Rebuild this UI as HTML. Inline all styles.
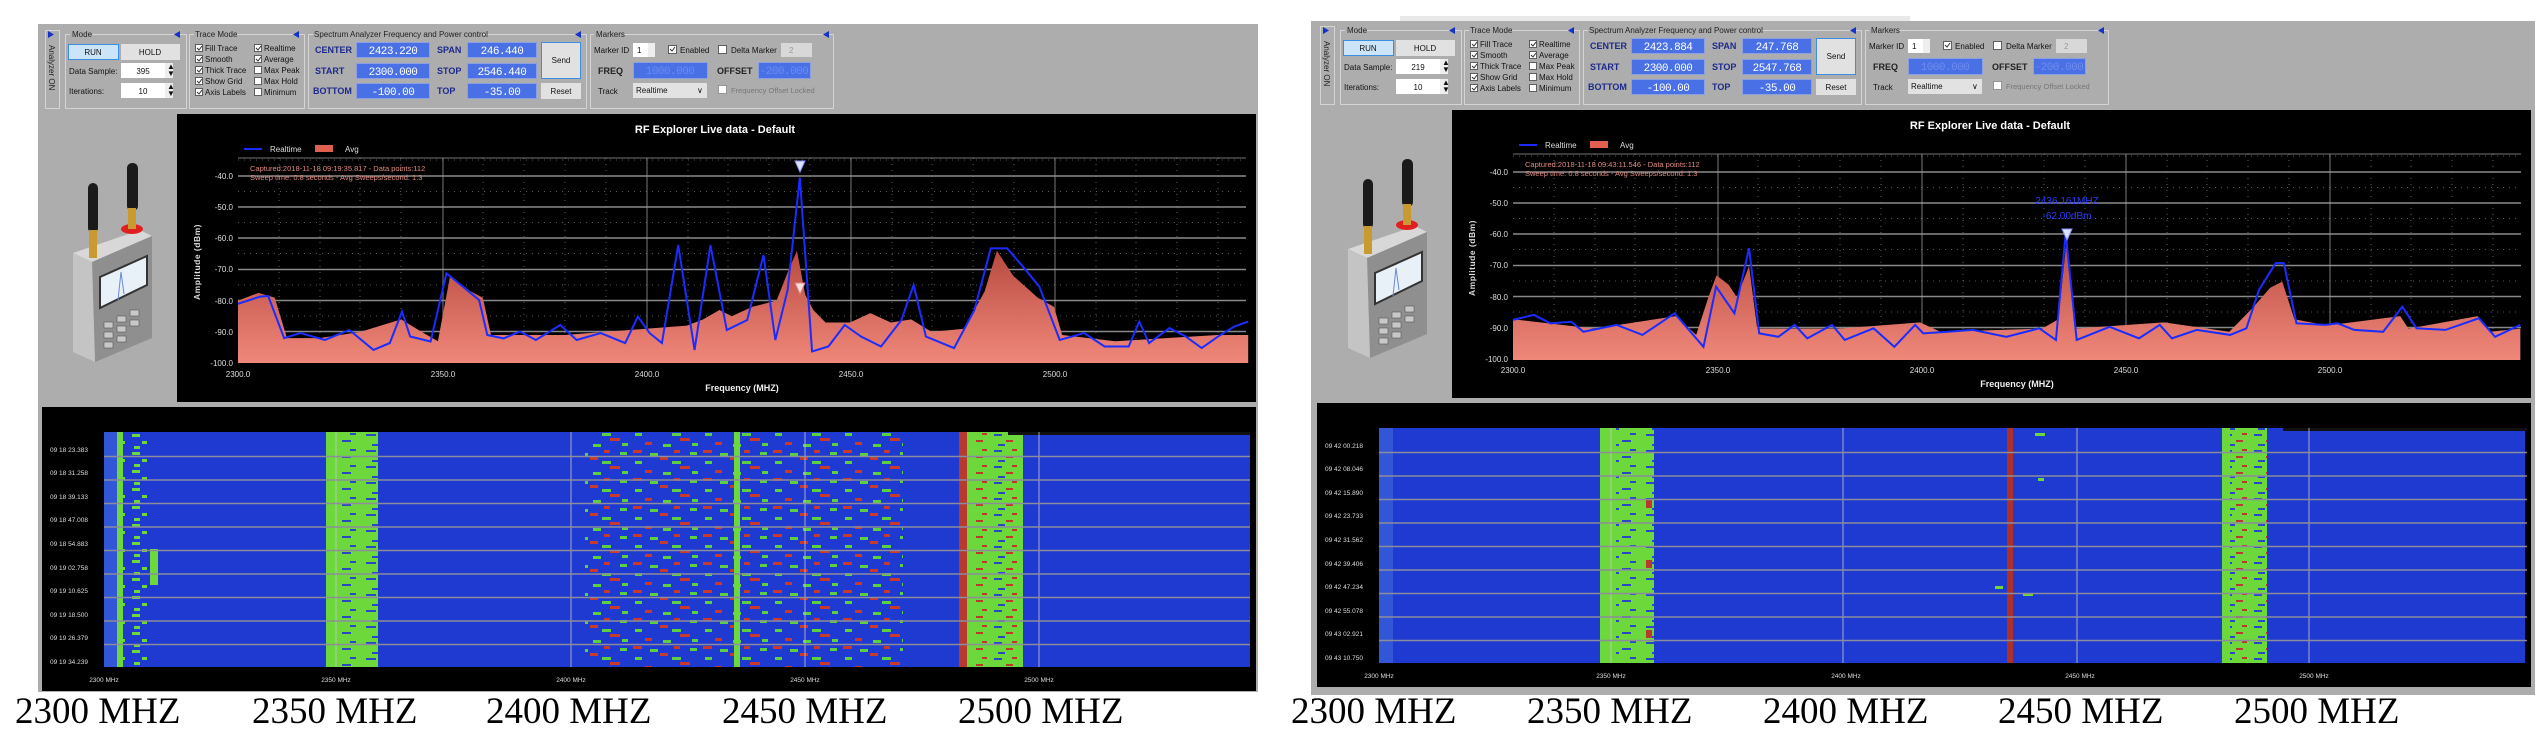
<!DOCTYPE html>
<html><head><meta charset="utf-8"><style>
html,body{margin:0;padding:0;background:#fff;width:2545px;height:752px;overflow:hidden}
svg{display:block}
text{font-family:"Liberation Sans",sans-serif}
.t8{font-size:8px;fill:#111}
.hd{font-size:8px;fill:#222}
.lb{font-size:9px;font-weight:bold;fill:#1c2a8c}
.dg{font-size:11px;fill:#fff;font-family:"Liberation Mono",monospace;letter-spacing:-0.5px}
.yt{font-size:8px;fill:#ddd;text-anchor:end}
.xt{font-size:8px;fill:#ddd;text-anchor:middle}
.tm{font-size:6.5px;fill:#ddd}
.ax{font-size:6.5px;fill:#ddd;text-anchor:middle}
.big text{font-family:"Liberation Serif",serif;font-size:37px;fill:#000}
</style></head><body>
<svg width="2545" height="752" viewBox="0 0 2545 752" xmlns="http://www.w3.org/2000/svg">
<defs>
<linearGradient id="rg" x1="0" y1="0" x2="0" y2="1"><stop offset="0" stop-color="#b84a40"/><stop offset="1" stop-color="#f0887a"/></linearGradient>
<pattern id="nz" width="70" height="28" patternUnits="userSpaceOnUse">
<rect x="3" y="2" width="9" height="3" fill="#c83a2c"/><rect x="30" y="9" width="8" height="3" fill="#c83a2c"/><rect x="50" y="18" width="10" height="3" fill="#c83a2c"/><rect x="15" y="22" width="7" height="3" fill="#c83a2c"/><rect x="44" y="2" width="6" height="3" fill="#c83a2c"/>
<rect x="20" y="5" width="8" height="3" fill="#5cd040"/><rect x="42" y="13" width="9" height="3" fill="#5cd040"/><rect x="5" y="13" width="7" height="3" fill="#5cd040"/><rect x="60" y="4" width="7" height="3" fill="#5cd040"/><rect x="33" y="24" width="8" height="3" fill="#5cd040"/><rect x="62" y="23" width="6" height="3" fill="#5cd040"/>
</pattern>
<pattern id="bt" width="40" height="16" patternUnits="userSpaceOnUse">
<rect x="6" y="2" width="10" height="2" fill="#2a48c0"/><rect x="22" y="8" width="9" height="2" fill="#2a48c0"/><rect x="12" y="12" width="7" height="2" fill="#2a48c0"/><rect x="30" y="1" width="6" height="2" fill="#2a48c0"/>
</pattern>
<pattern id="btr" width="30" height="16" patternUnits="userSpaceOnUse">
<rect x="4" y="2" width="8" height="2" fill="#2a48c0"/><rect x="16" y="8" width="7" height="2" fill="#b83a2c"/><rect x="8" y="12" width="7" height="2" fill="#2a48c0"/><rect x="22" y="1" width="5" height="2" fill="#b83a2c"/>
</pattern>
<pattern id="gd" width="26" height="18" patternUnits="userSpaceOnUse">
<rect x="2" y="2" width="8" height="3" fill="#6cd83c"/><rect x="12" y="9" width="9" height="3" fill="#6cd83c"/><rect x="4" y="14" width="6" height="3" fill="#6cd83c"/>
</pattern>

<g id="static">
 <g fill="none" stroke="#d4d4d4" stroke-width="1">
  <rect x="45.5" y="30.5" width="14" height="78"/>
  <rect x="65.5" y="34.5" width="121" height="74"/>
  <rect x="189.5" y="34.5" width="115" height="74"/>
  <rect x="308.5" y="34.5" width="278" height="74"/>
  <rect x="590.5" y="34.5" width="243" height="74"/>
 </g>
 <g fill="#1133cc">
  <polygon points="48,31 48,38 54,34.5"/>
  <polygon points="180,31 180,38 174,34.5"/>
  <polygon points="299,31 299,38 293,34.5"/>
  <polygon points="581,31 581,38 575,34.5"/>
  <polygon points="829,31 829,38 823,34.5"/>
 </g>
 <rect x="70" y="30" width="22" height="9" fill="#adadad"/><text class="hd" x="72" y="37">Mode</text>
 <rect x="194" y="30" width="42" height="9" fill="#adadad"/><text class="hd" x="195" y="37">Trace Mode</text>
 <rect x="313" y="30" width="170" height="9" fill="#adadad"/><text class="hd" x="314" y="37">Spectrum Analyzer Frequency and Power control</text>
 <rect x="594" y="30" width="30" height="9" fill="#adadad"/><text class="hd" x="596" y="37">Markers</text>
 <text class="hd" transform="translate(49,45) rotate(90)" font-size="7">Analyzer ON</text>
 <rect x="68.5" y="44.5" width="50" height="15" fill="#cce4f7" stroke="#3c8ee0"/><text class="t8" x="93" y="55" text-anchor="middle">RUN</text>
 <rect x="121" y="44" width="59" height="16" fill="#e1e1e1"/><text class="t8" x="150" y="55" text-anchor="middle">HOLD</text>
 <text class="t8" x="69" y="74">Data Sample:</text>
 <rect x="121" y="63" width="44" height="15" fill="#fff"/><rect x="165" y="63" width="8" height="15" fill="#eee"/><text class="t8" x="167" y="69" font-size="5">▲</text><text class="t8" x="167" y="76" font-size="5">▼</text>
 <text class="t8" x="69" y="94">Iterations:</text>
 <rect x="121" y="83" width="44" height="15" fill="#fff"/><rect x="165" y="83" width="8" height="15" fill="#eee"/><text class="t8" x="167" y="89" font-size="5">▲</text><text class="t8" x="167" y="96" font-size="5">▼</text>
 <text class="t8" x="143" y="94" text-anchor="middle">10</text>
 <g fill="#fff" stroke="#444" stroke-width="0.8">
  <rect x="195.5" y="44.5" width="7" height="7"/><rect x="195.5" y="55.5" width="7" height="7"/><rect x="195.5" y="66.5" width="7" height="7"/><rect x="195.5" y="77.5" width="7" height="7"/><rect x="195.5" y="88.5" width="7" height="7"/>
  <rect x="254.5" y="44.5" width="7" height="7"/><rect x="254.5" y="55.5" width="7" height="7"/><rect x="254.5" y="66.5" width="7" height="7"/><rect x="254.5" y="77.5" width="7" height="7"/><rect x="254.5" y="88.5" width="7" height="7"/>
 </g>
 <g fill="none" stroke="#333" stroke-width="1">
  <path d="M197 48l2 2 3-4M197 59l2 2 3-4M197 70l2 2 3-4M197 81l2 2 3-4M197 92l2 2 3-4M256 48l2 2 3-4M256 59l2 2 3-4"/>
 </g>
 <g class="t8" font-size="7">
  <text x="205" y="51">Fill Trace</text><text x="205" y="62">Smooth</text><text x="205" y="73">Thick Trace</text><text x="205" y="84">Show Grid</text><text x="205" y="95">Axis Labels</text>
  <text x="264" y="51">Realtime</text><text x="264" y="62">Average</text><text x="264" y="73">Max Peak</text><text x="264" y="84">Max Hold</text><text x="264" y="95">Minimum</text>
 </g>
 <text class="lb" x="315" y="53">CENTER</text><text class="lb" x="315" y="74">START</text><text class="lb" x="313" y="94">BOTTOM</text>
 <text class="lb" x="437" y="53">SPAN</text><text class="lb" x="437" y="74">STOP</text><text class="lb" x="437" y="94">TOP</text>
 <g fill="#4a70e6" stroke="#8aa0e0" stroke-width="1">
  <rect x="356.5" y="42.5" width="73" height="15"/><rect x="356.5" y="63.5" width="73" height="15"/><rect x="356.5" y="83.5" width="73" height="15"/>
  <rect x="467.5" y="42.5" width="69" height="15"/><rect x="467.5" y="63.5" width="69" height="15"/><rect x="467.5" y="83.5" width="69" height="15"/>
 </g>
 <text class="dg" x="393" y="75" text-anchor="middle">2300.000</text>
 <text class="dg" x="393" y="95" text-anchor="middle">-100.00</text>
 <text class="dg" x="502" y="95" text-anchor="middle">-35.00</text>
 <rect x="541.5" y="42.5" width="39" height="36" fill="#e1e1e1" stroke="#3c8ee0"/><text class="t8" x="561" y="63" text-anchor="middle">Send</text>
 <rect x="541" y="83" width="40" height="16" fill="#e1e1e1"/><text class="t8" x="561" y="94" text-anchor="middle">Reset</text>
 <text class="t8" x="594" y="53">Marker ID</text>
 <rect x="633" y="43" width="15" height="14" fill="#fff"/><rect x="648" y="43" width="7" height="14" fill="#eee"/><text class="t8" x="637" y="53">1</text>
 <rect x="668.5" y="45.5" width="8" height="8" fill="#fff" stroke="#444" stroke-width="0.8"/><path d="M670 49l2 2 3-4" stroke="#333" fill="none"/>
 <text class="t8" x="680" y="53">Enabled</text>
 <rect x="718.5" y="45.5" width="8" height="8" fill="#fff" stroke="#444" stroke-width="0.8"/>
 <text class="t8" x="731" y="53">Delta Marker</text>
 <rect x="781" y="43" width="31" height="14" fill="#d8d8d8"/><text x="789" y="53" font-size="8" fill="#999">2</text>
 <text class="lb" x="598" y="74" style="fill:#222">FREQ</text>
 <rect x="633.5" y="62.5" width="74" height="16" fill="#4a70e6" stroke="#8aa0e0"/><text class="dg" x="670" y="74" text-anchor="middle" style="fill:#6d8cf0">1000.000</text>
 <text class="lb" x="717" y="74" style="fill:#222">OFFSET</text>
 <rect x="758.5" y="62.5" width="52" height="16" fill="#4a70e6" stroke="#8aa0e0"/><text class="dg" x="784" y="74" text-anchor="middle" style="fill:#6d8cf0">-200.000</text>
 <text class="t8" x="598" y="94">Track</text>
 <rect x="633" y="83" width="74" height="15" fill="#e2e2e2"/><text class="t8" x="636" y="93">Realtime</text><text class="t8" x="697" y="93">∨</text>
 <rect x="718.5" y="85.5" width="8" height="8" fill="#fff" stroke="#888" stroke-width="0.8"/>
 <text x="731" y="93" font-size="7.5" fill="#777">Frequency Offset Locked</text>

 <polygon points="73,253 140,230 152,236 152,338 95,362 73,352" fill="#a6a6a6"/>
 <polygon points="73,253 140,230 152,236 92,262" fill="#d8d8d8"/>
 <polygon points="92,262 152,236 152,338 95,362" fill="#8f8f8f"/>
 <polygon points="73,253 92,262 95,362 73,352" fill="#c4c4c4"/>
 <polygon points="100,277 147,256 147,285 100,308" fill="#e8f0f8" stroke="#333" stroke-width="2"/>
 <path d="M118 300 L121 272 L124 294" stroke="#6a8ad0" fill="none"/>
 <g fill="#c8c8c8" stroke="#555" stroke-width="0.6">
  <rect x="104" y="322" width="9" height="6"/><rect x="117" y="316" width="9" height="6"/><rect x="130" y="310" width="9" height="6"/>
  <rect x="104" y="332" width="9" height="6"/><rect x="117" y="326" width="9" height="6"/><rect x="130" y="320" width="9" height="6"/>
  <rect x="117" y="336" width="9" height="6"/><rect x="104" y="342" width="9" height="6"/>
 </g>
 <rect x="88" y="183" width="10" height="50" rx="5" fill="#1a1a1a"/>
 <rect x="89" y="230" width="8" height="28" fill="#c89a30"/>
 <rect x="127" y="163" width="11" height="48" rx="5" fill="#1a1a1a"/>
 <ellipse cx="132" cy="229" rx="11" ry="5" fill="#e02020"/>
 <rect x="128" y="208" width="8" height="21" fill="#c89a30"/>

 <rect x="177" y="114" width="1079" height="288" fill="#000"/>
 <text x="715" y="133" text-anchor="middle" font-size="11" font-weight="bold" fill="#fff">RF Explorer Live data - Default</text>
 <line x1="244" y1="149" x2="262" y2="149" stroke="#1a2cff" stroke-width="2"/><text x="270" y="152" font-size="8" fill="#ddd">Realtime</text>
 <rect x="315" y="145" width="18" height="7" fill="#e06050"/><text x="345" y="152" font-size="8" fill="#ddd">Avg</text>
 <g stroke="#777" stroke-width="0.8" stroke-dasharray="1,5">
  <line x1="238" y1="160" x2="1246" y2="160"/><line x1="238" y1="191.5" x2="1246" y2="191.5"/><line x1="238" y1="222.5" x2="1246" y2="222.5"/><line x1="238" y1="253.5" x2="1246" y2="253.5"/><line x1="238" y1="285" x2="1246" y2="285"/><line x1="238" y1="316" x2="1246" y2="316"/><line x1="238" y1="347" x2="1246" y2="347"/>
  <line x1="279" y1="158" x2="279" y2="363"/><line x1="320" y1="158" x2="320" y2="363"/><line x1="360" y1="158" x2="360" y2="363"/><line x1="401" y1="158" x2="401" y2="363"/><line x1="483" y1="158" x2="483" y2="363"/><line x1="524" y1="158" x2="524" y2="363"/><line x1="565" y1="158" x2="565" y2="363"/><line x1="606" y1="158" x2="606" y2="363"/><line x1="688" y1="158" x2="688" y2="363"/><line x1="728" y1="158" x2="728" y2="363"/><line x1="769" y1="158" x2="769" y2="363"/><line x1="810" y1="158" x2="810" y2="363"/><line x1="892" y1="158" x2="892" y2="363"/><line x1="932" y1="158" x2="932" y2="363"/><line x1="973" y1="158" x2="973" y2="363"/><line x1="1014" y1="158" x2="1014" y2="363"/><line x1="1096" y1="158" x2="1096" y2="363"/><line x1="1136" y1="158" x2="1136" y2="363"/><line x1="1177" y1="158" x2="1177" y2="363"/><line x1="1218" y1="158" x2="1218" y2="363"/>
 </g>
 <g stroke="#8a8a8a" stroke-width="1.5">
  <line x1="238" y1="176" x2="1246" y2="176"/><line x1="238" y1="207" x2="1246" y2="207"/><line x1="238" y1="238" x2="1246" y2="238"/><line x1="238" y1="269.5" x2="1246" y2="269.5"/><line x1="238" y1="300.5" x2="1246" y2="300.5"/><line x1="238" y1="331.5" x2="1246" y2="331.5"/>
 </g>
 <g stroke="#999" stroke-width="0.8"><line x1="443" y1="158" x2="443" y2="363"/><line x1="647" y1="158" x2="647" y2="363"/><line x1="851" y1="158" x2="851" y2="363"/><line x1="1055" y1="158" x2="1055" y2="363"/><line x1="238" y1="158" x2="1246" y2="158"/></g>
 <g class="yt"><text x="233" y="179">-40.0</text><text x="233" y="210">-50.0</text><text x="233" y="241">-60.0</text><text x="233" y="272">-70.0</text><text x="233" y="304">-80.0</text><text x="233" y="335">-90.0</text><text x="233" y="366">-100.0</text></g>
 <g class="xt"><text x="238" y="377">2300.0</text><text x="443" y="377">2350.0</text><text x="647" y="377">2400.0</text><text x="851" y="377">2450.0</text><text x="1055" y="377">2500.0</text></g>
 <text x="742" y="391" text-anchor="middle" font-size="9" font-weight="bold" fill="#eee">Frequency (MHZ)</text>
 <text transform="translate(200,262) rotate(-90)" text-anchor="middle" font-size="8.5" font-weight="bold" fill="#ddd" letter-spacing="0.5">Amplitude (dBm)</text>

 <rect x="42" y="407" width="1214" height="284" fill="#000"/>
 <rect x="104" y="432" width="1146" height="235" fill="#1f3ad0"/>
 <rect x="104" y="432" width="14" height="235" fill="#3a64d8" opacity="0.7"/>
 <g class="ax"><text x="104" y="682">2300 MHz</text><text x="336" y="682">2350 MHz</text><text x="571" y="682">2400 MHz</text><text x="805" y="682">2450 MHz</text><text x="1039" y="682">2500 MHz</text></g>
</g>
</defs>

<rect x="38" y="24" width="1220" height="668" fill="#adadad"/>
<rect x="1400" y="16" width="510" height="6" fill="#e8e8e8"/>
<rect x="1311" y="21" width="1224" height="674" fill="#adadad"/>

<use href="#static"/>
<use href="#static" transform="translate(1275,-4)"/>

<text class="t8" x="143" y="74" text-anchor="middle">395</text>
<text class="dg" x="393" y="54" text-anchor="middle">2423.220</text>
<text class="dg" x="502" y="54" text-anchor="middle">246.440</text>
<text class="dg" x="502" y="75" text-anchor="middle">2546.440</text>
<text x="250" y="171" font-size="7.5" fill="#e08a80">Captured:2018-11-18 09:19:35.817 - Data points:112</text>
<text x="250" y="180" font-size="7.5" fill="#e08a80">Sweep time: 0.8 seconds - Avg Sweeps/second: 1.3</text>
<g transform="translate(238,176) scale(4.08,3.117)">
 <polygon fill="url(#rg)" points="0,40 5,37.5 9,39 12,52 20,52 30,50 40,46 45,50 49,53 52,32 57,37 60,39 62,51 80,51 100,49 110,48 114,46 118,43 121,45 126,42 132,40 135,30 137,24 139,38 141,43 144,47 150,47 155,44 160,47 165,46 170,50 178,49 183,37 186,24 190,32 196,39 200,42 202,51 215,53 240,51 247.6,51 247.6,60 0,60"/>
 <polyline fill="none" stroke="#1a2cff" stroke-width="2" vector-effect="non-scaling-stroke" points="0,41 5.4,38.7 7.4,38.5 11.3,52 15.3,50.4 21.3,52.6 27.3,49.4 33.2,55.8 37.2,53.6 40.2,43.5 42.2,51.5 47.2,53.1 51.1,31.2 55.1,35.5 59.1,39.8 61.1,51 65.1,52.1 69.1,49.9 73,52.6 79,47.8 83,52.6 88.9,50.4 94.9,53.6 98,45.1 100.9,50.4 103.9,53.6 107.9,22.2 111.9,55.8 115.8,22.2 119.8,49.4 124.8,46.2 128.8,25.4 131.7,52.6 134.7,36.6 137.7,0.5 140.7,56.3 144.7,54.7 148.7,47.8 152.7,51.5 157.6,54.7 162.6,46.2 165.6,35 168.6,51.5 175.5,55.2 180.5,43 184.5,23.2 188.5,23.2 192.4,29.1 196.4,35.5 201.4,52.6 207.4,50.4 212.4,54.7 218.3,54.7 220.9,46.7 223.3,53.6 228.3,48.8 232.3,51.5 236.2,55.2 240.2,51.5 244.2,48.3 247.6,46.7"/>
</g>
<polygon points="795,161 805,161 800,172" fill="#dde4ff" stroke="#8890ff"/>
<polygon points="795,283 805,283 800,294" fill="#ffe0e0" stroke="#e08080"/>

<rect x="117" y="432" width="6" height="235" fill="#6cd83c"/>
<rect x="123" y="432" width="24" height="235" fill="url(#gd)"/>
<rect x="150" y="549" width="8" height="36" fill="#6cd83c"/>
<rect x="326" y="432" width="52" height="235" fill="#6cd83c"/>
<rect x="340" y="432" width="38" height="235" fill="url(#bt)"/>
<rect x="585" y="432" width="318" height="235" fill="url(#nz)"/>
<rect x="734" y="432" width="6" height="235" fill="#6cd83c"/>
<rect x="959" y="432" width="8" height="235" fill="#b83a2c"/>
<rect x="967" y="432" width="56" height="235" fill="#6cd83c"/>
<rect x="975" y="432" width="48" height="235" fill="url(#btr)"/>
<rect x="1008" y="432" width="242" height="3" fill="#111"/>
<g stroke="#c8c8c8" stroke-width="0.8"><line x1="336" y1="432" x2="336" y2="667"/><line x1="571" y1="432" x2="571" y2="667"/><line x1="805" y1="432" x2="805" y2="667"/><line x1="1039" y1="432" x2="1039" y2="667"/></g>
<g stroke="#8c8c9c" stroke-width="1.5"><line x1="104" y1="456.5" x2="1250" y2="456.5"/><line x1="104" y1="480" x2="1250" y2="480"/><line x1="104" y1="503.5" x2="1250" y2="503.5"/><line x1="104" y1="527" x2="1250" y2="527"/><line x1="104" y1="550.5" x2="1250" y2="550.5"/><line x1="104" y1="574" x2="1250" y2="574"/><line x1="104" y1="597.5" x2="1250" y2="597.5"/><line x1="104" y1="621" x2="1250" y2="621"/><line x1="104" y1="644.5" x2="1250" y2="644.5"/></g>
<g class="tm"><text x="50" y="452">09 18 23.383</text><text x="50" y="475">09 18 31.258</text><text x="50" y="499">09 18 39.133</text><text x="50" y="522">09 18 47.008</text><text x="50" y="546">09 18 54.883</text><text x="50" y="570">09 19 02.758</text><text x="50" y="593">09 19 10.625</text><text x="50" y="617">09 19 18.500</text><text x="50" y="640">09 19 26.379</text><text x="50" y="664">09 19 34.239</text></g>
<g class="big"><text x="15" y="723">2300 MHZ</text><text x="252" y="723">2350 MHZ</text><text x="486" y="723">2400 MHZ</text><text x="722" y="723">2450 MHZ</text><text x="958" y="723">2500 MHZ</text></g>

<text class="t8" x="1418" y="70" text-anchor="middle">219</text>
<text class="dg" x="1668" y="50" text-anchor="middle">2423.884</text>
<text class="dg" x="1777" y="50" text-anchor="middle">247.768</text>
<text class="dg" x="1777" y="71" text-anchor="middle">2547.768</text>
<text x="1525" y="167" font-size="7.5" fill="#e08a80">Captured:2018-11-18 09:43:11.546 - Data points:112</text>
<text x="1525" y="176" font-size="7.5" fill="#e08a80">Sweep time: 0.8 seconds - Avg Sweeps/second: 1.3</text>
<g transform="translate(1513,172) scale(4.07,3.133)">
 <polygon fill="url(#rg)" points="0,47 20,50 40,46 45,52 48,40 50,33 53,36 55,40 58,30 60,50 80,50 100,48 105,51 130,50 134,47 136,22 138,50 160,48 176,51 182,43 186,37 189,35 192,47 200,49 218,46 220,50 237,46 240,51 247.5,50 247.5,60 0,60"/>
 <polyline fill="none" stroke="#1a2cff" stroke-width="2" vector-effect="non-scaling-stroke" points="0,47.2 5.1,45.6 9.2,48.3 14.3,47.8 17.3,51 25.5,48.8 31.8,52 39.7,45.1 46.8,55.8 49.9,36.6 54.4,45.1 58,24.3 60.5,51.5 65.2,52.6 69.2,48.8 72.3,53.1 78.4,48.8 81.5,53.6 88.6,49.9 93.7,55.8 98.8,48.8 100.8,51.5 106.9,51 113,50.4 121.2,52.6 129.3,49.9 133.4,53.6 135.8,19.5 138.5,53.6 146.6,49.4 153.8,53.1 158.9,48.8 161.9,53.1 168,50.4 176.2,52 180.2,49.9 183.3,37.6 187.4,29.1 189.4,29.1 192.5,48.3 199.6,48.8 202.6,48.3 206.7,50.4 213.8,51 218.5,43 222,49.9 229.1,50.4 237.3,46.7 241.3,52.6 247.5,48.8"/>
</g>
<polygon points="2062,229 2072,229 2067,240" fill="#dde4ff" stroke="#8890ff"/>
<text x="2067" y="204" text-anchor="middle" font-size="10" fill="#2a3cff">2436.161MHZ</text>
<text x="2067" y="219" text-anchor="middle" font-size="10" fill="#2a3cff">-62.00dBm</text>

<rect x="1600" y="428" width="54" height="235" fill="#6cd83c"/>
<rect x="1616" y="428" width="38" height="235" fill="url(#bt)"/>
<rect x="1646" y="500" width="6" height="8" fill="#b83a2c"/><rect x="1646" y="560" width="6" height="8" fill="#b83a2c"/><rect x="1646" y="630" width="6" height="8" fill="#b83a2c"/>
<rect x="2007" y="428" width="6" height="235" fill="#b03024"/>
<rect x="2222" y="428" width="45" height="235" fill="#6cd83c"/>
<rect x="2230" y="428" width="37" height="235" fill="url(#btr)"/>
<rect x="2035" y="433" width="10" height="3" fill="#6cd83c"/><rect x="2038" y="478" width="6" height="3" fill="#6cd83c"/><rect x="1995" y="586" width="8" height="3" fill="#6cd83c"/><rect x="2023" y="593" width="10" height="3" fill="#6cd83c"/>
<rect x="2283" y="428" width="244" height="3" fill="#111"/>
<g stroke="#c8c8c8" stroke-width="0.8"><line x1="1611" y1="428" x2="1611" y2="663"/><line x1="1843" y1="428" x2="1843" y2="663"/><line x1="2077" y1="428" x2="2077" y2="663"/><line x1="2309" y1="428" x2="2309" y2="663"/></g>
<g stroke="#8c8c9c" stroke-width="1.5"><line x1="1379" y1="452.5" x2="2527" y2="452.5"/><line x1="1379" y1="476" x2="2527" y2="476"/><line x1="1379" y1="499.5" x2="2527" y2="499.5"/><line x1="1379" y1="523" x2="2527" y2="523"/><line x1="1379" y1="546.5" x2="2527" y2="546.5"/><line x1="1379" y1="570" x2="2527" y2="570"/><line x1="1379" y1="593.5" x2="2527" y2="593.5"/><line x1="1379" y1="617" x2="2527" y2="617"/><line x1="1379" y1="640.5" x2="2527" y2="640.5"/></g>
<g class="tm"><text x="1325" y="448">09 42 00.218</text><text x="1325" y="471">09 42 08.046</text><text x="1325" y="495">09 42 15.890</text><text x="1325" y="518">09 42 23.733</text><text x="1325" y="542">09 42 31.562</text><text x="1325" y="566">09 42 39.406</text><text x="1325" y="589">09 42 47.234</text><text x="1325" y="613">09 42 55.078</text><text x="1325" y="636">09 43 02.921</text><text x="1325" y="660">09 43 10.750</text></g>
<g class="big"><text x="1291" y="723">2300 MHZ</text><text x="1527" y="723">2350 MHZ</text><text x="1763" y="723">2400 MHZ</text><text x="1998" y="723">2450 MHZ</text><text x="2234" y="723">2500 MHZ</text></g>
</svg>
</body></html>
